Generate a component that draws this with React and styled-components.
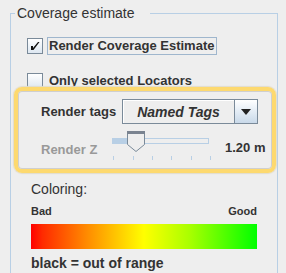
import React from "react";
import styled, { createGlobalStyle } from "styled-components";

const Global = createGlobalStyle`
  html, body { margin: 0; padding: 0; background: #eeeeee; }
  body { font-family: "Liberation Sans", Arial, sans-serif; color: #333333; overflow: hidden; }
`;

const Page = styled.div`
  width: 286px;
  height: 273px;
  overflow: hidden;
  background: #eeeeee;
  padding-top: 5px;
  box-sizing: border-box;
`;

const Group = styled.fieldset`
  margin: 0 0 0 10px;
  padding: 0 0 40px 0;
  width: 268px;
  box-sizing: border-box;
  border: 1px solid #b8cfe5;
  border-bottom: none;
  display: flex;
  flex-direction: column;
`;

const Title = styled.legend`
  margin-left: 4px;
  padding: 0 15px 0 2px;
  font-size: 14px;
  line-height: 16px;
  color: #333333;
`;

const CheckRow = styled.div`
  display: flex;
  align-items: center;
  height: 18px;
  margin-top: ${(p) => p.$top}px;
  padding-left: 16px;
  gap: 4px;
`;

const Box = styled.span`
  width: 14px;
  height: 14px;
  border: 1px solid #7a8a99;
  background: linear-gradient(180deg, #ffffff 0%, #dde7f1 100%);
  display: flex;
  align-items: center;
  justify-content: center;
  flex: none;
`;

const CheckLabel = styled.span`
  font-size: 13px;
  font-weight: bold;
  line-height: 16px;
  padding: 0 2px 0 1px;
  border: 1px solid ${(p) => (p.$focus ? "#9fb6cd" : "transparent")};
`;

const Highlight = styled.div`
  margin: -3px 1px 0 3px;
  height: 86px;
  box-sizing: border-box;
  border: 4px solid #fdd96f;
  border-radius: 8px;
  box-shadow: inset 0 0 0 1px #cfcfcf, 0 0 1px 1px #e2dccb;
  display: flex;
  flex-direction: column;
  padding: 8px 0 0 23px;
`;

const FieldRow = styled.div`
  display: flex;
  align-items: ${(p) => p.$align || "center"};
  margin-top: ${(p) => p.$top || 0}px;
`;

const FieldLabel = styled.span`
  width: ${(p) => p.$w}px;
  flex: none;
  font-size: 13px;
  font-weight: bold;
  line-height: 16px;
  margin-top: ${(p) => p.$top || 0}px;
  color: ${(p) => (p.$disabled ? "#999999" : "#333333")};
`;

const Combo = styled.div`
  width: 136px;
  height: 25px;
  box-sizing: border-box;
  border: 1px solid #7a8a99;
  display: flex;
  background: #eeeeee;
`;

const ComboText = styled.span`
  flex: 1;
  display: flex;
  align-items: center;
  justify-content: center;
  font-size: 14px;
  font-weight: bold;
  font-style: italic;
  box-shadow: inset 1px 1px 0 #ffffff;
  border-right: 1px solid #7a8a99;
`;

const ComboButton = styled.span`
  width: 22px;
  flex: none;
  display: flex;
  align-items: center;
  justify-content: center;
  background: linear-gradient(180deg, #ffffff 0%, #e6eef6 45%, #c9d9e9 100%);
`;

const SliderWrap = styled.div`
  width: 113px;
  height: 30px;
  flex: none;
`;

const Value = styled.span`
  font-size: 13px;
  font-weight: bold;
  line-height: 16px;
  align-self: center;
  margin-top: 4px;
`;

const Coloring = styled.div`
  margin: 8px 0 0 20px;
  font-size: 14px;
  line-height: 16px;
`;

const Scale = styled.div`
  display: flex;
  justify-content: space-between;
  width: 226px;
  margin: 8px 0 0 20px;
  font-size: 11px;
  font-weight: bold;
  line-height: 13px;
`;

const Bar = styled.div`
  width: 226px;
  height: 25px;
  margin: 6px 0 0 20px;
  background: linear-gradient(90deg, #ff0000 0%, #ff2a00 5%, #ff8c00 25%, #ffff00 50%, #aaff00 70%, #00ff00 100%);
`;

const Note = styled.div`
  margin: 6px 0 0 20px;
  font-size: 14px;
  font-weight: bold;
  line-height: 16px;
`;

const Check = () => (
  <svg width="12" height="12" viewBox="0 0 12 12">
    <path d="M2 6 L4 6 L4 8 L9 2 L10.5 2 L4.5 10 L2 10 Z" fill="#111111" />
  </svg>
);

const Slider = () => {
  const ticks = [1, 21, 40, 59, 79, 98];
  return (
    <svg width="113" height="30" viewBox="0 0 113 30">
      <rect x="0.5" y="7.5" width="96" height="5" fill="#eeeeee" stroke="#b8cfe5" />
      <rect x="0.5" y="7.5" width="16" height="5" fill="#b8cfe5" />
      {ticks.map((t) => (
        <line key={t} x1={t + 0.5} y1="25" x2={t + 0.5} y2="29" stroke="#b8cfe5" />
      ))}
      <path d="M15.5 2.5 L32.5 2.5 L32.5 13.5 L24 20.5 L15.5 13.5 Z" fill="#eeeeee" stroke="#7a8a99" />
      <rect x="15" y="0" width="18" height="3" fill="#7a8390" />
    </svg>
  );
};

export default function App() {
  return (
    <Page>
      <Global />
      <Group>
        <Title>Coverage estimate</Title>
        <CheckRow $top={16}>
          <Box><Check /></Box>
          <CheckLabel $focus>Render Coverage Estimate</CheckLabel>
        </CheckRow>
        <CheckRow $top={17}>
          <Box />
          <CheckLabel>Only selected Locators</CheckLabel>
        </CheckRow>
        <Highlight>
          <FieldRow>
            <FieldLabel $w={81}>Render tags</FieldLabel>
            <Combo>
              <ComboText>Named Tags</ComboText>
              <ComboButton>
                <svg width="10" height="6" viewBox="0 0 10 6">
                  <path d="M0 0 L10 0 L5 6 Z" fill="#222222" />
                </svg>
              </ComboButton>
            </Combo>
          </FieldRow>
          <FieldRow $top={7} $align="flex-start">
            <FieldLabel $w={71} $top={11} $disabled>Render Z</FieldLabel>
            <SliderWrap><Slider /></SliderWrap>
            <Value>1.20 m</Value>
          </FieldRow>
        </Highlight>
        <Coloring>Coloring:</Coloring>
        <Scale>
          <span>Bad</span>
          <span>Good</span>
        </Scale>
        <Bar />
        <Note>black = out of range</Note>
      </Group>
    </Page>
  );
}
